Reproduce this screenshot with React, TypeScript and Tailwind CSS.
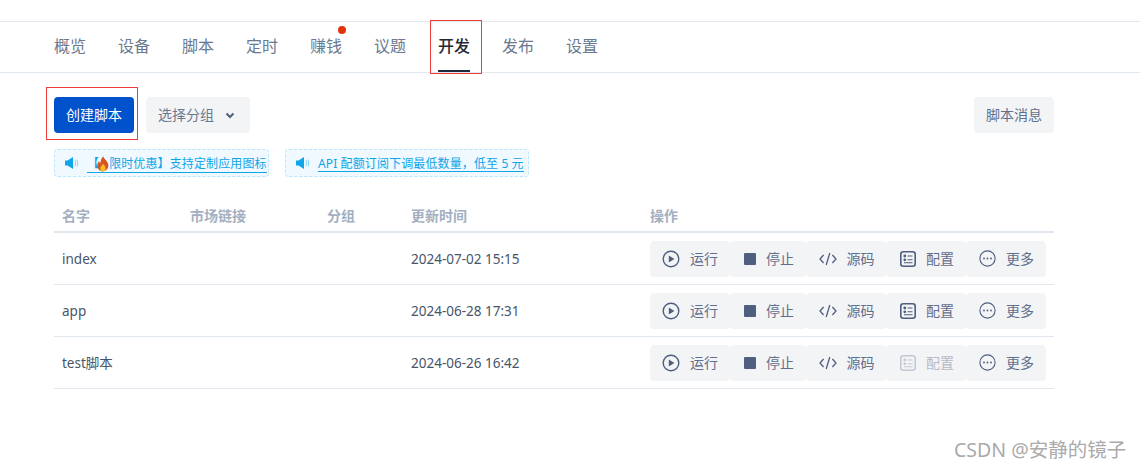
const tabs = ['概览', '设备', '脚本', '定时', '赚钱', '议题', '开发', '发布', '设置'];

const rows = [
  { name: 'index', time: '2024-07-02 15:15', configDisabled: false },
  { name: 'app', time: '2024-06-28 17:31', configDisabled: false },
  { name: 'test脚本', time: '2024-06-26 16:42', configDisabled: true },
];

function PlayIcon() {
  return (
    <svg width="18" height="18" viewBox="0 0 18 18" fill="none">
      <circle cx="9" cy="9" r="7.800" stroke="#4f5f7f" strokeWidth="1.400" />
      <path d="M6.800 5.600v6.800L12.400 9z" fill="#4f5f7f" />
    </svg>
  );
}

function StopIcon() {
  return <span className="block h-3 w-3 rounded-[1px] bg-[#4f5f7f]" />;
}

function CodeIcon() {
  return (
    <svg width="18" height="14" viewBox="0 0 18 14" fill="none" stroke="#4f5f7f" strokeWidth="1.300">
      <path d="M4.600 3 1 7l3.600 4M13.400 3 17 7l-3.600 4M10.800 1 7.200 13" />
    </svg>
  );
}

function ConfigIcon({ disabled }: { disabled: boolean }) {
  const color = disabled ? '#c3c9d4' : '#4f5f7f';
  return (
    <svg width="16" height="16" viewBox="0 0 16 16" fill="none">
      <rect x="0.800" y="0.800" width="14.400" height="14.400" rx="2.500" stroke={color} strokeWidth="1.600" />
      <circle cx="4.800" cy="5" r="1.400" fill={color} />
      <circle cx="4.800" cy="8.800" r="1.400" fill={color} />
      <path d="M7.500 5h5M7.500 8.800h5M4 11.800h8.500" stroke={color} strokeWidth="1.100" />
    </svg>
  );
}

function MoreIcon() {
  return (
    <svg width="17" height="17" viewBox="0 0 17 17" fill="none">
      <circle cx="8.500" cy="8.500" r="7.600" stroke="#4f5f7f" strokeWidth="1.100" />
      <circle cx="5" cy="8.500" r="0.900" fill="#4f5f7f" />
      <circle cx="8.500" cy="8.500" r="0.900" fill="#4f5f7f" />
      <circle cx="12" cy="8.500" r="0.900" fill="#4f5f7f" />
    </svg>
  );
}

function SpeakerIcon() {
  return (
    <svg width="14" height="12" viewBox="0 0 14 12" fill="none" className="shrink-0">
      <path d="M0 3.600h2.600L8 0v12L2.600 8.400H0z" fill="#0ea5e9" />
      <path d="M10 3.200c.8 1.700.8 3.900 0 5.600M12 2.600c.9 2.100.9 4.700 0 6.800" stroke="#7dd3fc" strokeWidth="1" />
    </svg>
  );
}

function Flame() {
  return (
    <svg width="12" height="16" viewBox="0 0 11 14" className="-ml-[2px] inline-block align-[-4px]">
      <path d="M5.600 0c.5 2 3.200 3.600 4.400 6.200C11.200 9 10 13 5.500 13.800 1.500 13.500-.5 10 .4 6.800c.4-1.200 1-2 1.600-2.600.1 1 .4 1.700 1 2C3.200 4 4.200 1.800 5.600 0z" fill="#d9541e" />
      <path d="M5.500 6.500c.4 1.200 2.400 2.300 2.400 4.300 0 1.700-1.100 3-2.400 3s-2.500-1.200-2.500-2.900c0-1.800 2-2.600 2.500-4.400z" fill="#fbbf24" />
    </svg>
  );
}

function Action({ w, icon, label, iconBox, disabled }: { w: string; icon: React.ReactNode; label: string; iconBox: string; disabled?: boolean }) {
  return (
    <div className={`flex h-9 items-center justify-center rounded bg-[#f3f4f6] text-sm ${w} ${disabled ? 'text-[#b4bac6]' : 'text-[#5f6f8c]'}`}>
      <span className={`flex items-center ${iconBox}`}>{icon}</span>
      <span>{label}</span>
    </div>
  );
}

function Notice({ children, w }: { children: React.ReactNode; w: string }) {
  return (
    <div className={`flex h-7 items-center rounded border border-dashed border-[#bae6fd] bg-[#f0f9ff] pl-2.5 text-xs tracking-[0.12px] ${w}`}>
      <SpeakerIcon />
      <span className="ml-2 mt-[2px] whitespace-nowrap border-b border-[#0ea5e9] leading-[15px] text-[#0ea5e9]">{children}</span>
    </div>
  );
}

export default function App() {
  return (
    <div
      className="relative h-[469px] w-[1140px] overflow-hidden bg-white pt-[21px]"
      style={{ fontFamily: '"Noto Sans", "Noto Sans CJK SC", sans-serif' }}
    >
      <nav className="flex h-[52px] items-stretch gap-8 border-y border-[#e2e8f0] pl-[54px]">
        {tabs.map((t) => (
          <div
            key={t}
            className={`relative flex w-8 items-center justify-center pb-[2px] text-base ${t === '开发' ? 'font-medium text-[#1f2937]' : 'text-[#6b7a90]'}`}
          >
            {t}
            {t === '赚钱' && <span className="absolute right-[-4px] top-[4px] h-2 w-2 rounded-full bg-[#e0330c]" />}
            {t === '开发' && <span className="absolute bottom-0 left-0 h-0.5 w-8 bg-[#1e293b]" />}
          </div>
        ))}
      </nav>

      <div className="absolute left-[430px] top-[20px] h-[54px] w-[52px] border border-[#ef3b3b]" />
      <div className="absolute left-[46px] top-[87px] h-[53px] w-[92px] border border-[#ef3b3b]" />

      <main className="w-[1054px] pl-[54px] pt-6">
        <div className="flex items-center">
          <button className="h-9 w-20 rounded bg-[#0052cc] text-sm text-white">创建脚本</button>
          <button className="ml-3 flex h-9 w-[104px] items-center rounded bg-[#f3f4f6] pl-3 text-sm text-[#6b7a90]">
            选择分组
            <svg width="10" height="7" viewBox="0 0 10 7" fill="none" className="ml-[11px]">
              <path d="M1.500 1.500 5 5l3.500-3.500" stroke="#4f5f7f" strokeWidth="2" />
            </svg>
          </button>
          <button className="ml-auto h-9 w-20 rounded bg-[#f3f4f6] text-sm text-[#5f6f8c]">脚本消息</button>
        </div>

        <div className="mt-4 flex gap-4">
          <Notice w="w-[215px]">
            【<Flame />限时优惠】支持定制应用图标
          </Notice>
          <Notice w="w-[244px]">API 配额订阅下调最低数量，低至 5 元</Notice>
        </div>

        <div className="mt-[21px] grid h-[35px] grid-cols-[128px_137px_84px_239px_1fr] items-center border-b-2 border-[#e2e8f0] pt-[3px] text-sm font-bold text-[#a3afc0]">
          <div className="pl-2">名字</div>
          <div className="pl-2">市场链接</div>
          <div className="pl-2">分组</div>
          <div className="pl-2">更新时间</div>
          <div className="pl-2">操作</div>
        </div>

        {rows.map((r) => (
          <div
            key={r.name}
            className="grid h-[52px] grid-cols-[128px_137px_84px_239px_1fr] items-center border-b border-[#e2e8f0] text-[13.5px] text-[#475569]"
          >
            <div className="pl-2 pt-[1px]">{r.name}</div>
            <div />
            <div />
            <div className="pl-2 pt-[1px]">{r.time}</div>
            <div className="flex pl-2">
              <Action w="w-20" iconBox="mr-[10px]" icon={<PlayIcon />} label="运行" />
              <Action w="w-[76px]" iconBox="ml-[2px] mr-[10px]" icon={<StopIcon />} label="停止" />
              <Action w="w-20" iconBox="ml-[2px] mr-[9px] -translate-x-px" icon={<CodeIcon />} label="源码" />
              <Action w="w-20" iconBox="ml-[2px] mr-[10px]" icon={<ConfigIcon disabled={r.configDisabled} />} label="配置" disabled={r.configDisabled} />
              <Action w="w-20" iconBox="ml-[2px] mr-[9px] -translate-x-px" icon={<MoreIcon />} label="更多" />
            </div>
          </div>
        ))}
      </main>

      <div className="absolute left-[954px] top-[435px] text-[19.5px] text-[#aaaaaa]">CSDN @安静的镜子</div>
    </div>
  );
}
